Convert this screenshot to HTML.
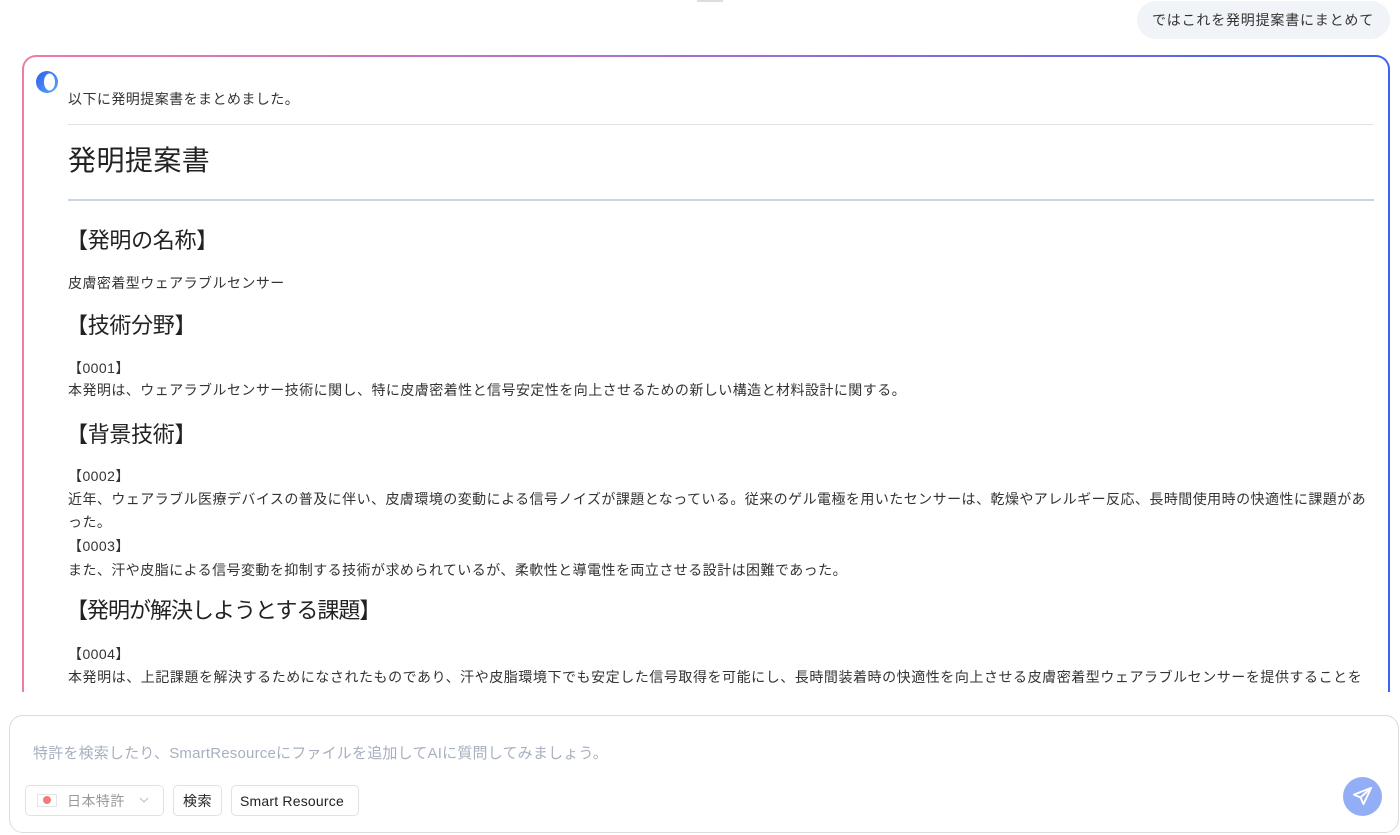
<!DOCTYPE html>
<html><head><meta charset="utf-8"><style>
*{margin:0;padding:0;box-sizing:border-box}
body{width:1400px;height:835px;overflow:hidden;background:#fff;font-family:"Liberation Sans","Noto Sans CJK JP",sans-serif;color:#333;position:relative}
.t{position:absolute;white-space:nowrap;font-size:14px;line-height:20px;color:#333;letter-spacing:0.45px}
.h2{font-size:22px;line-height:30px;color:#222;letter-spacing:-0.3px}
.card{position:absolute;left:22px;top:55px;width:1368px;height:700px;border-radius:14px;padding:2px;background:linear-gradient(90deg,#f07aa8,#9a6ed8 55%,#3f63f0)}
.card>div{width:100%;height:100%;background:#fff;border-radius:12px}
.clip{position:absolute;left:0;top:0;width:1400px;height:692px;overflow:hidden}
.hr{position:absolute;left:68px;width:1306px}
</style></head><body>
<div style="position:absolute;left:697px;top:0;width:26px;height:2px;background:#ddd"></div>
<div style="position:absolute;left:1137px;top:1px;width:253px;height:38px;border-radius:19px;background:#f0f3f7"></div>
<div class="t" style="left:1152px;top:10px;font-size:14px;letter-spacing:0.8px">ではこれを発明提案書にまとめて</div>
<div class="clip">
<div class="card"><div></div></div>
<svg style="position:absolute;left:35px;top:70px" width="26" height="26" viewBox="0 0 26 26"><defs><linearGradient id="g" x1="0" y1="0" x2="1" y2="1"><stop offset="0" stop-color="#2f5cf0"/><stop offset="1" stop-color="#5aa8f8"/></linearGradient></defs><circle cx="12" cy="12" r="11" fill="url(#g)"/><ellipse cx="14.5" cy="12" rx="5.5" ry="8.5" fill="#fff"/></svg>
<div class="t" style="left:68px;top:89px">以下に発明提案書をまとめました。</div>
<div class="hr" style="top:124px;height:1px;background:#e2e2e2"></div>
<div class="t" style="left:68px;top:143px;font-size:28px;line-height:36px;color:#222">発明提案書</div>
<div class="hr" style="top:199px;height:2px;background:#cbd5e1"></div>
<div class="t h2" style="left:66px;top:226px">【発明の名称】</div>
<div class="t" style="left:68px;top:273px">皮膚密着型ウェアラブルセンサー</div>
<div class="t h2" style="left:66px;top:311px">【技術分野】</div>
<div class="t" style="left:68px;top:358px">【0001】</div>
<div class="t" style="left:68px;top:380px">本発明は、ウェアラブルセンサー技術に関し、特に皮膚密着性と信号安定性を向上させるための新しい構造と材料設計に関する。</div>
<div class="t h2" style="left:66px;top:420px">【背景技術】</div>
<div class="t" style="left:68px;top:466px">【0002】</div>
<div class="t" style="left:68px;top:489px">近年、ウェアラブル医療デバイスの普及に伴い、皮膚環境の変動による信号ノイズが課題となっている。従来のゲル電極を用いたセンサーは、乾燥やアレルギー反応、長時間使用時の快適性に課題があ</div>
<div class="t" style="left:68px;top:512px">った。</div>
<div class="t" style="left:68px;top:536px">【0003】</div>
<div class="t" style="left:68px;top:560px">また、汗や皮脂による信号変動を抑制する技術が求められているが、柔軟性と導電性を両立させる設計は困難であった。</div>
<div class="t h2" style="left:66px;top:596px;letter-spacing:-1px">【発明が解決しようとする課題】</div>
<div class="t" style="left:68px;top:644px">【0004】</div>
<div class="t" style="left:68px;top:667px;letter-spacing:0.55px">本発明は、上記課題を解決するためになされたものであり、汗や皮脂環境下でも安定した信号取得を可能にし、長時間装着時の快適性を向上させる皮膚密着型ウェアラブルセンサーを提供することを</div>
</div>
<div style="position:absolute;left:9px;top:715px;width:1390px;height:118px;border:1px solid #dcdcdc;border-radius:14px;background:#fff"></div>
<div class="t" style="left:33px;top:744px;color:#a8b0c0;font-size:15px;letter-spacing:0.2px">特許を検索したり、SmartResourceにファイルを追加してAIに質問してみましょう。</div>
<div style="position:absolute;left:25px;top:785px;width:139px;height:31px;border:1px solid #e2e2e2;border-radius:5px"></div>
<div style="position:absolute;left:37px;top:794px;width:20px;height:13px;border:1px solid #e5e5e5;background:#fff"></div>
<div style="position:absolute;left:43px;top:796px;width:8px;height:8px;border-radius:50%;background:#f27b7b"></div>
<div class="t" style="left:67px;top:791px;color:#999">日本特許</div>
<svg style="position:absolute;left:139px;top:797px" width="10" height="6"><path d="M1 1l4 4 4-4" stroke="#bbb" fill="none"/></svg>
<div style="position:absolute;left:173px;top:785px;width:49px;height:31px;border:1px solid #e2e2e2;border-radius:5px"></div>
<div class="t" style="left:183px;top:791px;color:#222">検索</div>
<div style="position:absolute;left:231px;top:785px;width:128px;height:31px;border:1px solid #e2e2e2;border-radius:5px"></div>
<div class="t" style="left:240px;top:791px;color:#222;letter-spacing:0.2px">Smart Resource</div>
<div style="position:absolute;left:1343px;top:777px;width:39px;height:39px;border-radius:50%;background:#93aef6"></div>
<svg style="position:absolute;left:1351px;top:785px" width="23" height="23" viewBox="0 0 24 24"><path d="M21 3L3 10l7 3 3 7z M10 13l11-10" stroke="#fff" stroke-width="2" fill="none" stroke-linejoin="round"/></svg>
</body></html>
